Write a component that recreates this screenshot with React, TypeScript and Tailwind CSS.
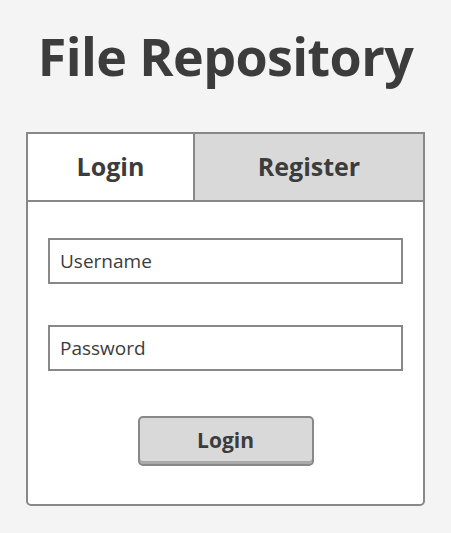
export default function App() {
  return (
    <div
      className="min-h-screen bg-[#f4f4f4] pt-[24px] text-[#3c3c3c]"
      style={{ fontFamily: '"Open Sans", "Noto Sans", sans-serif' }}
    >
      <h1 className="text-center text-[52px] font-bold leading-[64px] tracking-[-0.6px]">
        File Repository
      </h1>

      <div className="mx-[26px] mt-[44px] rounded-b-[5px] border-2 border-[#888888] bg-white">
        {/* tabs */}
        <div className="flex h-[68px] border-b-2 border-[#888888]">
          <button
            type="button"
            className="flex w-[167px] items-center justify-center border-r-2 border-[#888888] bg-white text-[25px] font-bold"
          >
            Login
          </button>
          <button
            type="button"
            className="flex flex-1 items-center justify-center bg-[#d9d9d9] text-[25px] font-bold"
          >
            Register
          </button>
        </div>

        {/* form */}
        <div className="flex flex-col px-5 pb-[38px] pt-9">
          <input
            type="text"
            placeholder="Username"
            className="h-[46px] border-2 border-[#888888] bg-white px-[10px] text-[19px] font-medium text-[#3c3c3c] outline-none placeholder:text-[#3c3c3c]"
          />
          <input
            type="password"
            placeholder="Password"
            className="mt-[41px] h-[46px] border-2 border-[#888888] bg-white px-[10px] text-[19px] font-medium text-[#3c3c3c] outline-none placeholder:text-[#3c3c3c]"
          />
          <button
            type="button"
            className="mx-auto mt-[45px] h-[50px] w-[176px] rounded-[5px] border-2 border-[#888888] bg-[#d9d9d9] text-[21px] font-bold shadow-[inset_0_-3px_0_#a9a9a9]"
          >
            Login
          </button>
        </div>
      </div>
    </div>
  );
}
